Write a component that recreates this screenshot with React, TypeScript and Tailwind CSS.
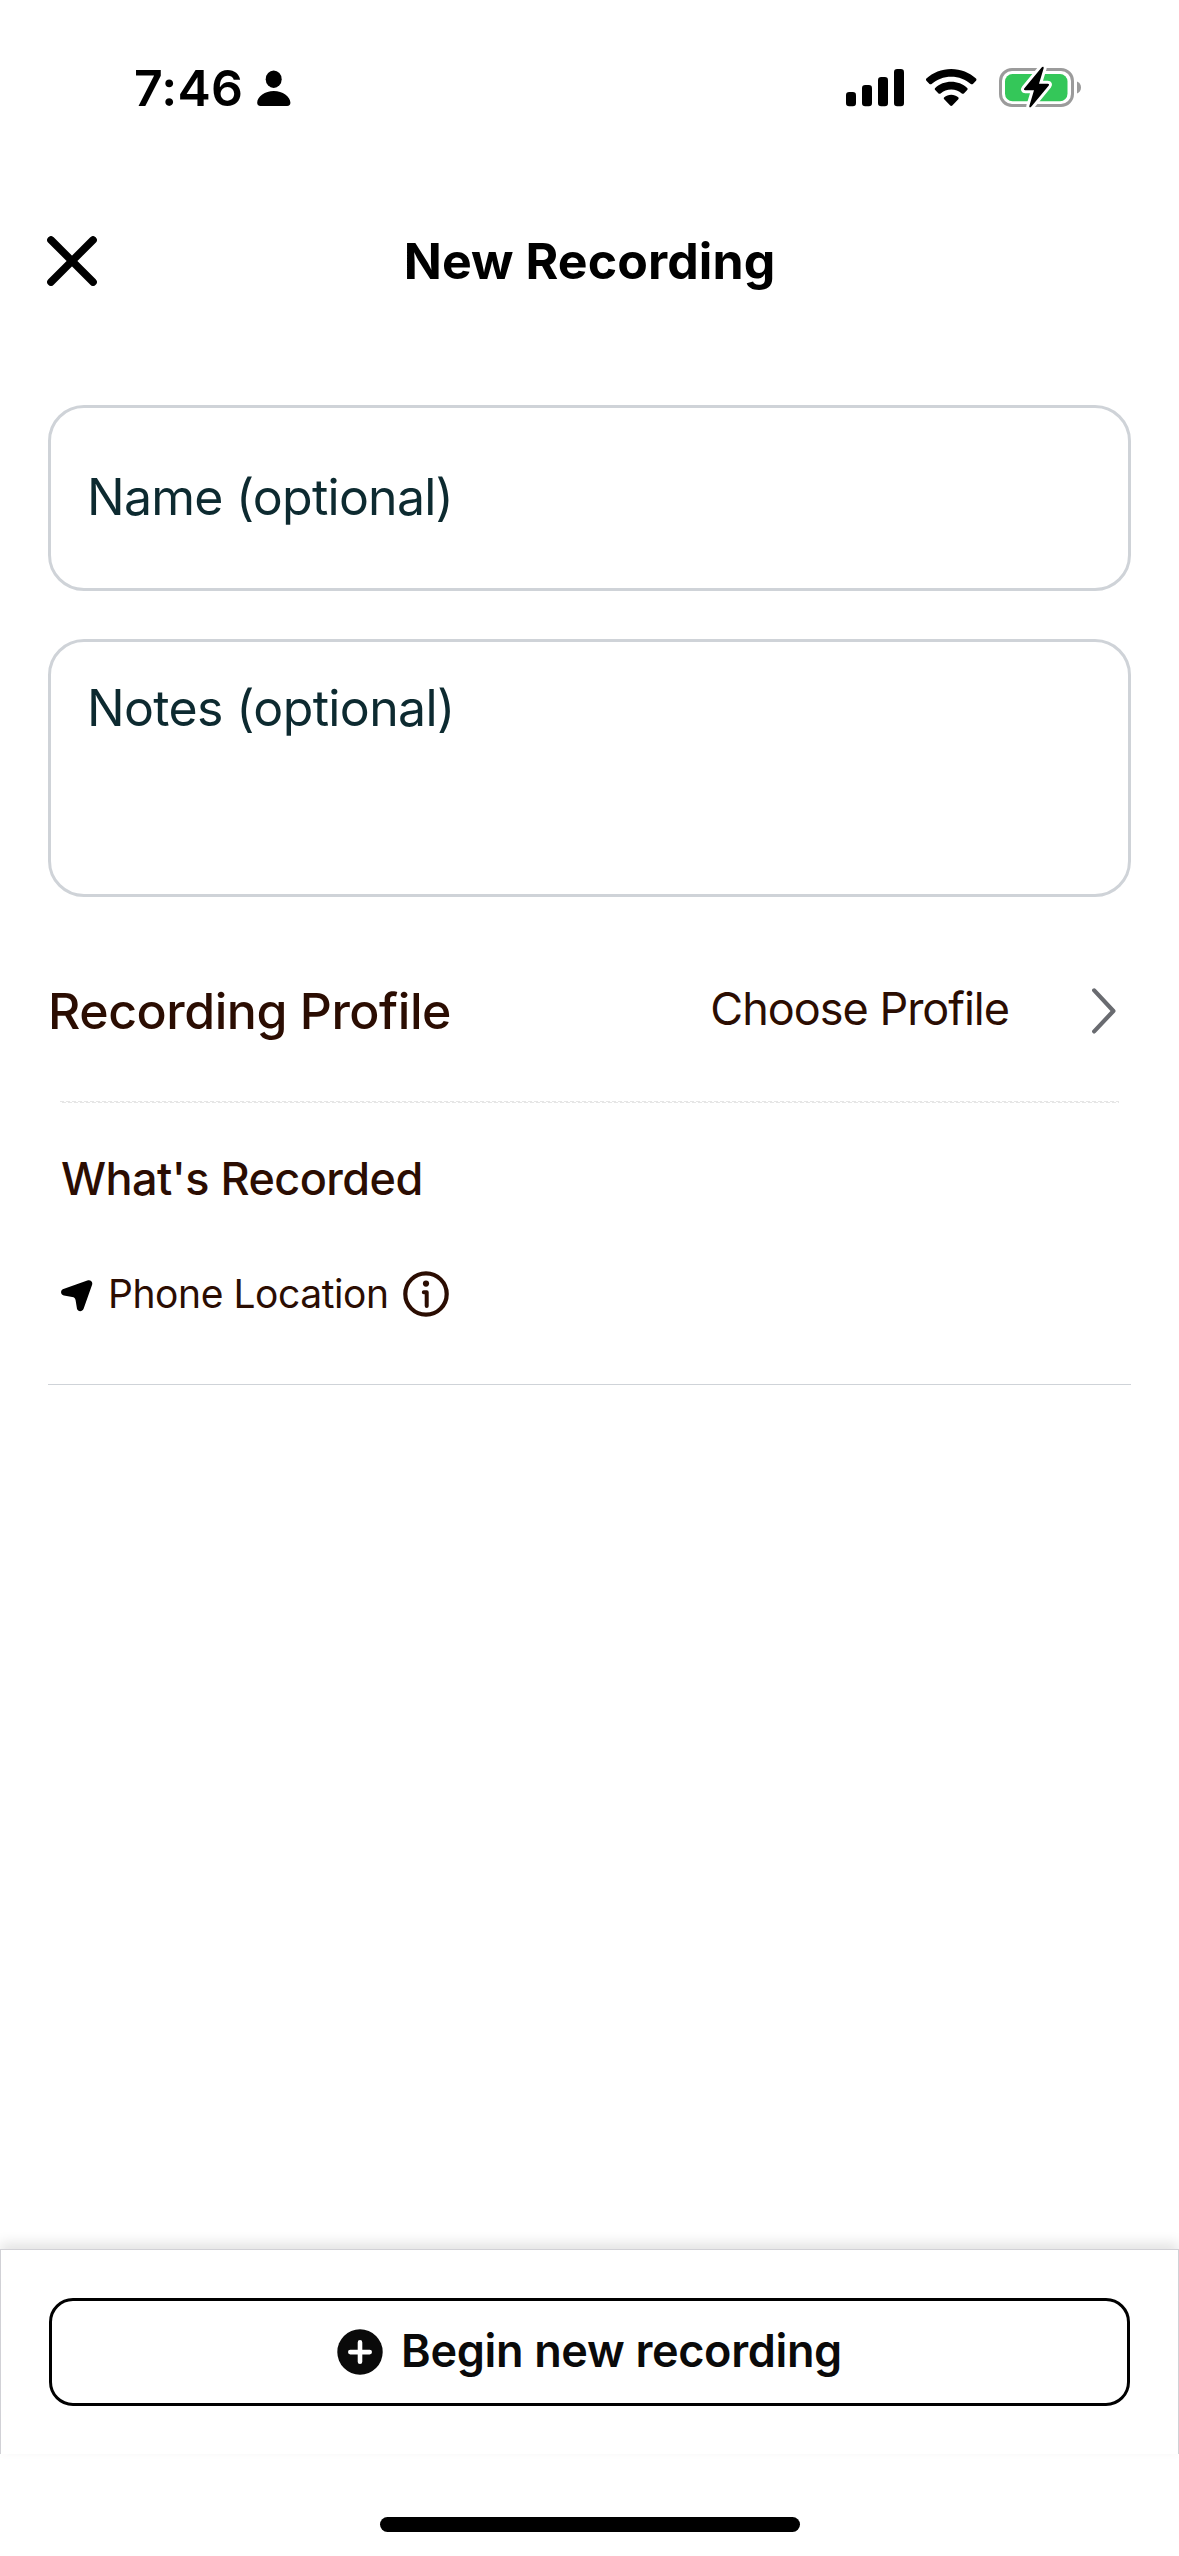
function PersonIcon() {
  return (
    <svg width="34" height="38" viewBox="0 0 34 38" fill="currentColor">
      <ellipse cx="16.7" cy="10.2" rx="8" ry="8.7" />
      <path d="M16.8 22c8.8 0 16.4 5.4 16.6 11.6.1 2.300-1.100 3.400-3.300 3.400H3.500C1.300 37 .1 35.900.2 33.600.4 27.400 8 22 16.800 22Z" />
    </svg>
  );
}

function SignalIcon() {
  return (
    <svg width="58" height="38" viewBox="0 0 58 38" fill="currentColor">
      <rect x="0" y="23" width="10" height="14.300" rx="3.200" />
      <rect x="16" y="16" width="10" height="21.300" rx="3.200" />
      <rect x="32" y="8" width="10" height="29.300" rx="3.200" />
      <rect x="48" y="0" width="10" height="37.300" rx="3.200" />
    </svg>
  );
}

function WifiIcon() {
  return (
    <svg width="51" height="38" viewBox="0 0 51 38" fill="currentColor">
      <path d="M25.200 0C34.800 0 43.600 3.500 50 9.600c.6.6.6 1.500 0 2.100L46.900 14.900c-.6.6-1.500.6-2.100.1C39.600 10.300 32.700 7.700 25.200 7.700S10.800 10.300 5.600 15c-.6.500-1.500.5-2.100-.1L.4 11.700c-.6-.6-.6-1.500 0-2.100C6.800 3.500 15.600 0 25.200 0Z" />
      <path d="M25.200 12.800c6.100 0 11.800 2.200 16 6.100.6.600.6 1.500 0 2.100l-3.300 3.400c-.6.600-1.500.6-2.100.100-2.900-2.600-6.600-4-10.600-4s-7.700 1.400-10.600 4c-.6.500-1.500.5-2.100-.1L9.200 21c-.6-.6-.6-1.500 0-2.100 4.200-3.900 9.900-6.100 16-6.100Z" />
      <path d="M25.200 25.700c2.700 0 5.100.9 7 2.500.6.600.6 1.500.1 2.100l-6 6.300c-.6.600-1.500.6-2.100 0l-6-6.300c-.6-.6-.6-1.500.1-2.100 1.800-1.600 4.300-2.500 6.900-2.500Z" />
    </svg>
  );
}

function BatteryIcon() {
  const bolt =
    "M42.600.500 25.400 21.300c-.9 1.100-.4 2 .9 2h8.700l-4.600 15.400c-.5 1.800.9 2.300 2 .9L49.600 18.700c.9-1.100.4-2-.9-2H40L44.600 1.400C45.100-.4 43.700-.8 42.600.500Z";
  return (
    <svg width="83" height="42" viewBox="0 0 83 42" className="overflow-visible">
      <rect x="1.500" y="2.500" width="72" height="36" rx="11.500" fill="none" stroke="#9b9b9b" strokeWidth="3" />
      <path d="M78 14.500c2.600 1 4 3.200 4 6s-1.400 5-4 6Z" fill="#9b9b9b" />
      <rect x="6" y="7" width="62.500" height="27.300" rx="7.500" fill="#34c759" />
      <path d={bolt} fill="#fff" stroke="#fff" strokeWidth="6" strokeLinejoin="round" />
      <path d={bolt} fill="#000" />
    </svg>
  );
}

function CloseIcon() {
  return (
    <svg width="50" height="50" viewBox="0 0 50 50" fill="none" stroke="#000" strokeWidth="7.600" strokeLinecap="round">
      <path d="M4 4 46 46M46 4 4 46" />
    </svg>
  );
}

function ChevronIcon() {
  return (
    <svg width="24" height="46" viewBox="0 0 24 46" fill="none" stroke="#696b70" strokeWidth="4.200" strokeLinecap="round" strokeLinejoin="round">
      <path d="M2.200 2.400 21.400 23 2.200 43.400" />
    </svg>
  );
}

function LocationIcon() {
  return (
    <svg width="32" height="32" viewBox="0 0 32 32" fill="#000">
      <path d="M2.400 9 26.300.6C29.600-.4 32 1.700 31.100 4.800L22.600 28.800C21.400 32 16.800 32 16 28.700L14.600 20.300C14.300 18.200 13.300 17.200 11.200 16.900L2.900 15.400C-.6 14.700-1 10.300 2.400 9Z" />
    </svg>
  );
}

function InfoIcon() {
  return (
    <svg width="46" height="46" viewBox="0 0 46 46" fill="none" stroke="#2b0d02" strokeLinecap="round" strokeLinejoin="round">
      <circle cx="23" cy="23" r="20.700" strokeWidth="4.200" />
      <path d="M20.800 21.200H23.700V35" strokeWidth="4" />
      <circle cx="23" cy="12.600" r="3.100" fill="#2b0d02" stroke="none" />
    </svg>
  );
}

function PlusCircleIcon() {
  return (
    <svg width="46" height="46" viewBox="0 0 46 46">
      <circle cx="23" cy="23" r="22.700" fill="#0a0a0a" />
      <path d="M23 13.400V32.800M13.300 23.100H32.700" stroke="#fff" strokeWidth="4.600" strokeLinecap="round" />
    </svg>
  );
}

function DashedDivider() {
  return (
    <svg width="1059" height="2" className="mx-auto block">
      <defs>
        <pattern id="dash" width="6" height="2" patternUnits="userSpaceOnUse">
          <rect x="0" y="0" width="4" height="1" fill="#e6e6e6" />
          <rect x="2" y="1" width="4" height="1" fill="#e6e6e6" />
        </pattern>
      </defs>
      <rect width="1059" height="2" fill="url(#dash)" />
    </svg>
  );
}

function StatusBar() {
  return (
    <div className="flex h-[176px] items-center pl-[134px] pr-[97px]">
      <span className="text-[50px] leading-[60px] font-semibold tracking-[0.2px]">7:46</span>
      <div className="ml-[14px]">
        <PersonIcon />
      </div>
      <div className="ml-auto flex items-center">
        <SignalIcon />
        <div className="ml-[22px]">
          <WifiIcon />
        </div>
        <div className="ml-[22px]">
          <BatteryIcon />
        </div>
      </div>
    </div>
  );
}

export default function App() {
  return (
    <div className="flex h-[2556px] w-[1179px] flex-col overflow-hidden bg-white font-['Inter',sans-serif] text-black">
      <StatusBar />

      <header className="grid h-[170px] grid-cols-[100px_1fr_100px] items-center px-[47px]">
        <button aria-label="Close">
          <CloseIcon />
        </button>
        <h1 className="text-center text-[50px] leading-[60px] font-bold tracking-[0.080px]">New Recording</h1>
      </header>

      <main className="flex flex-1 flex-col px-12 pt-[59px]">
        <div className="flex h-[186px] items-center rounded-[36px] border-[3px] border-[#cfd3d8] pb-[3px] pl-9">
          <span className="text-[50px] leading-[60px] tracking-[-0.760px] text-[#0d2a30]">Name (optional)</span>
        </div>
        <div className="mt-12 h-[258px] rounded-[36px] border-[3px] border-[#cfd3d8] pt-9 pl-9">
          <p className="text-[50px] leading-[60px] tracking-[-0.640px] text-[#0d2a30]">Notes (optional)</p>
        </div>

        <div className="mt-6 flex h-[180px] items-center text-[#2b0d02]">
          <span className="text-[50px] leading-[60px] font-medium tracking-[-0.460px]">Recording Profile</span>
          <span className="mr-[83px] ml-auto pb-1 text-[45px] leading-[60px] tracking-[-1px]">Choose Profile</span>
          <div className="mr-[15px]">
            <ChevronIcon />
          </div>
        </div>
        <DashedDivider />

        <section className="border-b border-[#cfd3d8] px-[13px] pt-[46px] pb-[60px] text-[#2b0d02]">
          <h2 className="text-[45px] leading-[60px] font-medium tracking-[-0.550px]">What's Recorded</h2>
          <div className="mt-[55px] flex h-[60px] items-center">
            <div className="pt-1">
              <LocationIcon />
            </div>
            <span className="ml-[15px] text-[39px] leading-[60px] tracking-[-0.440px]">Phone Location</span>
            <div className="ml-[14px]">
              <InfoIcon />
            </div>
          </div>
        </section>
      </main>

      <footer className="h-[205px] border-x border-t border-[#d1d1d6] bg-white px-12 pt-12 shadow-[0_-6px_12px_rgba(0,0,0,0.115)]">
        <button className="flex h-[108px] w-full items-center justify-center rounded-[24px] border-[3px] border-black">
          <PlusCircleIcon />
          <span className="ml-[18px] pb-[3px] text-[45px] leading-[60px] font-semibold tracking-[-0.330px] text-[#0a0a0a]">
            Begin new recording
          </span>
        </button>
      </footer>
      <div className="flex h-[102px] justify-center pt-[63px]">
        <div className="h-[15px] w-[420px] rounded-full bg-black" />
      </div>
    </div>
  );
}
